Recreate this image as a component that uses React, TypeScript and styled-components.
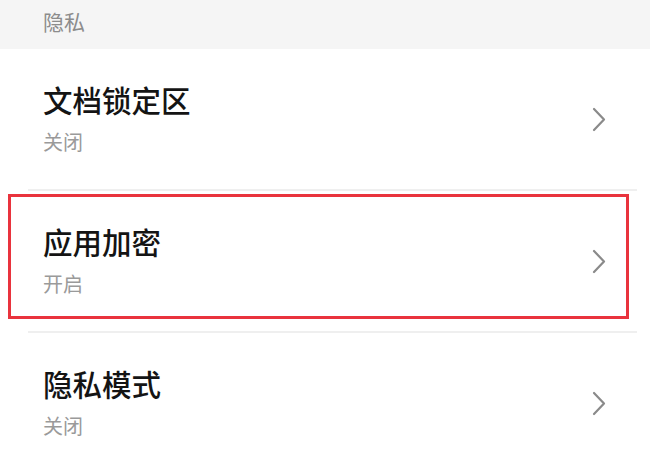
import styled, { createGlobalStyle } from "styled-components";

const GlobalStyle = createGlobalStyle`
  body {
    margin: 0;
    background: #ffffff;
    font-family: "Noto Sans CJK SC", "Noto Sans", sans-serif;
  }
`;

const Page = styled.div`
  width: 650px;
  background: #ffffff;
`;

const SectionHeader = styled.div`
  height: 49px;
  box-sizing: border-box;
  padding: 11px 0 0 43px;
  background: #f5f5f5;
  color: #8c8c8c;
  font-size: 21px;
  line-height: 21px;
`;

const Row = styled.div`
  position: relative;
  display: flex;
  align-items: center;
  justify-content: space-between;
  height: 140px;
  box-sizing: border-box;
  padding: 0 44px 0 43px;
`;

const Texts = styled.div`
  display: flex;
  flex-direction: column;
  gap: 18px;
  padding-bottom: 2px;
`;

const Title = styled.div`
  color: #141414;
  font-size: 29.5px;
  line-height: 29px;
  font-weight: 500;
`;

const Status = styled.div`
  color: #9a9a9a;
  font-size: 20px;
  line-height: 20px;
`;

const Divider = styled.div`
  height: 2px;
  margin: 0 13px 0 28px;
  background: #efefef;
`;

// red annotation frame drawn over the highlighted row
const Highlight = styled.div`
  position: absolute;
  left: 8px;
  right: 21px;
  top: 3px;
  bottom: 12px;
  border: 3px solid #e9333d;
  pointer-events: none;
`;

const Chevron = () => (
  <svg width="14" height="25" viewBox="0 0 14 25" fill="none">
    <path
      d="M2 2 L12 12.5 L2 23"
      stroke="#8a8a8a"
      strokeWidth="2.2"
      strokeLinecap="round"
      strokeLinejoin="round"
    />
  </svg>
);

const items = [
  { title: "文档锁定区", status: "关闭" },
  { title: "应用加密", status: "开启", highlight: true },
  { title: "隐私模式", status: "关闭" },
];

const App = () => {
  return (
    <>
      <GlobalStyle />
      <Page>
        <SectionHeader>隐私</SectionHeader>
        {items.map((item, i) => (
          <div key={item.title}>
            {i > 0 && <Divider />}
            <Row>
              {item.highlight && <Highlight />}
              <Texts>
                <Title>{item.title}</Title>
                <Status>{item.status}</Status>
              </Texts>
              <Chevron />
            </Row>
          </div>
        ))}
      </Page>
    </>
  );
};

export default App;
